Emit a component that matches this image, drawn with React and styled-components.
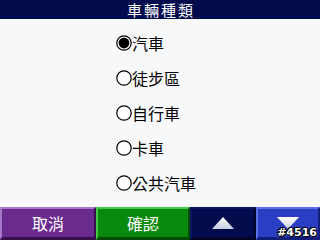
import React, { useState } from 'react';
import styled, { createGlobalStyle } from 'styled-components';

const GlobalStyle = createGlobalStyle`
  html, body {
    margin: 0;
    padding: 0;
    background: #f7f8fa;
  }
  body {
    font-family: "Noto Sans CJK TC", "Noto Sans", sans-serif;
  }
`;

const options = ['汽車', '徒步區', '自行車', '卡車', '公共汽車'];

const Screen = styled.div`
  width: 320px;
  height: 240px;
  display: flex;
  flex-direction: column;
  position: relative;
  overflow: hidden;
  background: #f7f8fa;
`;

const Header = styled.div`
  height: 19px;
  flex-shrink: 0;
  background: #020b4c;
  display: flex;
  align-items: center;
  justify-content: center;
`;

const Title = styled.span`
  color: #ffffff;
  font-size: 15px;
  line-height: 15px;
  letter-spacing: 2px;
  padding-left: 2px;
`;

const List = styled.div`
  flex: 1;
  display: flex;
  flex-direction: column;
  padding: 6px 0 0 116px;
`;

const Row = styled.label`
  height: 35px;
  display: flex;
  align-items: center;
  font-size: 16px;
  color: #000000;
  cursor: pointer;
`;

const Radio = ({ on }) => (
  <svg width="16" height="16" viewBox="0 0 16 16" style={{ display: 'block' }}>
    <circle cx="8" cy="8" r="7.2" fill="#ffffff" stroke="#000000" strokeWidth="1.2" />
    {on && <circle cx="8" cy="8" r="5.4" fill="#000000" />}
  </svg>
);

const Footer = styled.div`
  height: 33px;
  flex-shrink: 0;
  display: flex;
`;

const Button = styled.div`
  width: ${p => p.w}px;
  box-sizing: border-box;
  display: flex;
  align-items: center;
  justify-content: center;
  color: #ffffff;
  font-size: 16px;
  background: ${p => p.bg};
  border-top: 2px solid ${p => p.light};
  border-left: 2px solid ${p => p.light};
  border-bottom: 3px solid ${p => p.dark};
  border-right: 2px solid ${p => p.dark};
`;

const Tag = styled.div`
  position: absolute;
  right: 3px;
  bottom: 1px;
  font-family: "DejaVu Sans", sans-serif;
  font-size: 11px;
  font-weight: bold;
  color: #ffffff;
  text-shadow: -1px 0 #000, 1px 0 #000, 0 -1px #000, 0 1px #000, 1px 1px #000, -1px -1px #000;
`;

const Arrow = ({ up }) => (
  <svg width="22" height="12" viewBox="0 0 22 12" style={{ display: 'block' }}>
    <defs>
      <linearGradient id={up ? 'gu' : 'gd'} x1="0" y1="0" x2="0" y2="1">
        <stop offset="0" stopColor="#ffffff" />
        <stop offset="1" stopColor="#c8cce0" />
      </linearGradient>
    </defs>
    <polygon
      points={up ? '11,0 22,12 0,12' : '0,0 22,0 11,12'}
      fill={`url(#${up ? 'gu' : 'gd'})`}
    />
  </svg>
);

export default function App() {
  const [sel, setSel] = useState(0);
  return (
    <Screen>
      <GlobalStyle />
      <Header><Title>車輛種類</Title></Header>
      <List>
        {options.map((o, i) => (
          <Row key={o} onClick={() => setSel(i)}>
            <Radio on={sel === i} />
            {o}
          </Row>
        ))}
      </List>
      <Footer>
        <Button w={96} bg="#6a2a8e" light="#a878c8" dark="#35104a">取消</Button>
        <Button w={94} bg="#0a8a0c" light="#48c848" dark="#034a04">確認</Button>
        <Button w={66} bg="#020b4c" light="#0a1660" dark="#01052a"><Arrow up /></Button>
        <Button w={64} bg="#2a3ec4" light="#5a70e4" dark="#101e7a"><Arrow /></Button>
      </Footer>
      <Tag>#4516</Tag>
    </Screen>
  );
}
